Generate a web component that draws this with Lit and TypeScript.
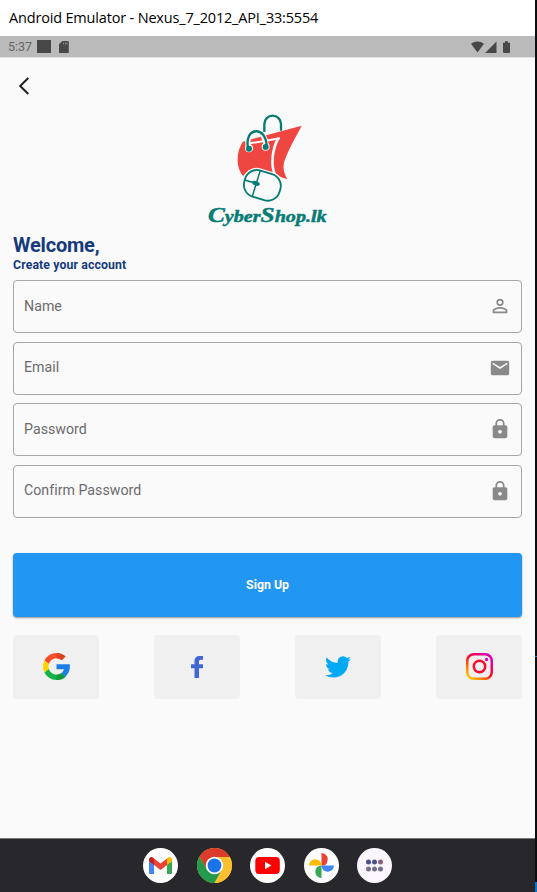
import { LitElement, html, css, svg } from "lit";
import { customElement, property } from "lit/decorators.js";

const glyphs: Record<string, unknown> = {
  person: svg`<path d="M12 5.9a2.1 2.1 0 1 1 0 4.2 2.1 2.1 0 0 1 0-4.2m0 9c2.97 0 6.1 1.46 6.1 2.1v1.1H5.9V17c0-.64 3.13-2.1 6.1-2.1M12 4a4 4 0 1 0 0 8 4 4 0 0 0 0-8zm0 9c-2.67 0-8 1.34-8 4v3h16v-3c0-2.66-5.33-4-8-4z"/>`,
  mail: svg`<path d="M20 4H4c-1.1 0-2 .9-2 2v12c0 1.1.9 2 2 2h16c1.1 0 2-.9 2-2V6c0-1.1-.9-2-2-2zm0 4-8 5-8-5V6l8 5 8-5z"/>`,
  lock: svg`<path d="M18 8h-1V6c0-2.76-2.24-5-5-5S7 3.24 7 6v2H6c-1.100 0-2 .9-2 2v10c0 1.100.9 2 2 2h12c1.100 0 2-.9 2-2V10c0-1.100-.9-2-2-2zm-6 9c-1.100 0-2-.9-2-2s.9-2 2-2 2 .9 2 2-.9 2-2 2zm3.100-9H8.900V6a3.100 3.100 0 0 1 6.200 0z"/>`,
};

@customElement("form-field")
class FormField extends LitElement {
  @property() label = "";
  @property() icon = "";
  static styles = css`
    :host {
      display: flex; align-items: center; justify-content: space-between;
      box-sizing: border-box; height: 53px; padding: 0 10px;
      border: 1px solid #a6a6a6; border-radius: 4px;
      font: 14.2px Roboto, sans-serif; color: #6c6c6c;
    }
    .label { line-height: 20px; padding-bottom: 2px; letter-spacing: 0.02px; }
    svg { width: 22px; height: 22px; fill: #898989; display: block; margin-bottom: 0.5px; }
  `;
  render() {
    return html`<span class="label">${this.label}</span>
      <svg viewBox="0 0 24 24">${glyphs[this.icon]}</svg>`;
  }
}

const shopLogo = html`<svg class="logo" viewBox="0 0 408 390">
  <path d="M193 72V48a25 25 0 0 1 50 0v20" fill="none" stroke="#087c74" stroke-width="7"/>
  <path d="M128 101L305 53C287 88 265 125 253 160c-6 20 0 38 9 53-12-2-22-5-31-14l-42-13-42 1-18 17C106 176 109 132 128 101z" fill="#f04641"/>
  <path d="M150 106L240 91" fill="none" stroke="#fafafa" stroke-width="6"/>
  <path d="M235 90c-17 32-25 78-9 114" fill="none" stroke="#fafafa" stroke-width="8"/>
  <path d="M146 119C130 58 196 50 198 115" fill="none" stroke="#fafafa" stroke-width="16"/>
  <circle cx="147" cy="121" r="12" fill="#fafafa"/><circle cx="197" cy="116" r="12" fill="#fafafa"/>
  <path d="M144 119C132 58 198 50 200 115" fill="none" stroke="#087c74" stroke-width="7"/>
  <circle cx="147" cy="122" r="9" fill="#087c74"/><circle cx="197" cy="117" r="9" fill="#087c74"/>
  <g transform="rotate(17 187 232)">
    <rect x="126" y="185" width="122" height="94" rx="42" fill="#fafafa"/>
    <rect x="132" y="191" width="110" height="82" rx="37" fill="#fafafa" stroke="#087c74" stroke-width="5.500"/>
    <path d="M168 191v82M132 232h36" fill="none" stroke="#087c74" stroke-width="4.500"/>
    <ellipse cx="167" cy="232" rx="12" ry="7" fill="#087c74"/>
  </g>
  <text class="brand" x="24" y="342" textLength="356" lengthAdjust="spacingAndGlyphs"><tspan class="cap">C</tspan>yber<tspan class="cap">S</tspan>hop.lk</text>
</svg>`;

const google = html`<svg class="g" viewBox="0 0 48 48">
  <path fill="#f94c28" d="M24 9.500c3.500 0 6.700 1.200 9.200 3.600l6.800-6.900C35.900 2.400 30.500 0 24 0 14.600 0 6.500 5.400 2.600 13.200l7.900 6.200C12.400 13.700 17.700 9.500 24 9.500z"/>
  <path fill="#d94522" d="M24 9.500c3.500 0 6.700 1.200 9.200 3.600l6.800-6.900C35.900 2.400 30.500 0 24 0z"/>
  <path fill="#1b7de8" d="M47.500 20H24v9h13.100c-.6 3-2.300 5.500-4.800 7.200l7.700 6C45.500 36.900 49 29 47.500 20z"/>
  <path fill="#ffd500" d="M10.500 28.600a14.500 14.500 0 0 1 0-9.200l-7.900-6.200a24 24 0 0 0 0 21.600z"/>
  <path fill="#12b347" d="M24 48c6.500 0 11.900-2.100 16-5.800l-7.700-6c-2.200 1.500-4.900 2.300-8.300 2.300-6.300 0-11.600-4.200-13.500-9.900l-7.900 6.200C6.500 42.600 14.600 48 24 48z"/>
  <path fill="#0f993e" d="M24 48c6.500 0 11.900-2.100 16-5.800l-7.700-6c-2.200 1.500-4.900 2.300-8.300 2.300z"/>
</svg>`;

const facebook = html`<svg class="f" viewBox="0 0 12 22">
  <path fill="#4267d5" d="M3.500 22V12.300H0V8.200h3.500V5.300C3.500 1.900 5.500 0 8.700 0H12v3.800H9.900C8.400 3.800 8 4.500 8 5.700v2.500h4v4.100H8V22z"/>
</svg>`;

const twitter = html`<svg class="t" viewBox="0 2 24 20">
  <path fill="#03a9f4" d="M23.950 4.570a10 10 0 0 1-2.820.77 4.960 4.960 0 0 0 2.160-2.720c-.95.550-2.010.950-3.130 1.180a4.920 4.920 0 0 0-8.380 4.480C7.690 8.090 4.070 6.130 1.640 3.160a4.920 4.920 0 0 0 1.520 6.570 4.900 4.900 0 0 1-2.230-.610v.060a4.920 4.920 0 0 0 3.950 4.830 5 5 0 0 1-2.210.080 4.940 4.940 0 0 0 4.600 3.420A9.870 9.870 0 0 1 0 19.540a13.990 13.990 0 0 0 7.550 2.210c9.050 0 14-7.500 14-13.980 0-.210 0-.420-.020-.630a9.940 9.940 0 0 0 2.420-2.570z"/>
</svg>`;

const instagram = html`<svg class="i" viewBox="0 0 27 27">
  <defs><linearGradient id="ig" x1="0.100" y1="1" x2="0.900" y2="0">
    <stop offset="0" stop-color="#ffc800"/><stop offset=".25" stop-color="#ff7a00"/>
    <stop offset=".5" stop-color="#ff0a20"/><stop offset=".72" stop-color="#f0006a"/><stop offset="1" stop-color="#d400c4"/>
  </linearGradient></defs>
  <rect x="1.250" y="1.250" width="24.500" height="24.500" rx="6.500" fill="none" stroke="url(#ig)" stroke-width="2.500"/>
  <circle cx="13.500" cy="13.500" r="5.700" fill="none" stroke="#fb0b2c" stroke-width="2.500"/>
  <circle cx="20.600" cy="6.500" r="1.650" fill="#dc00a4"/>
</svg>`;

const dockApps = [
  svg`<circle cx="17.500" cy="17.500" r="17.500" fill="#fff"/>
    <path fill="#4285f4" d="M6 13v11.500q0 1.500 1.500 1.500H11V14z"/>
    <path fill="#34a853" d="M24 14v12h3.500q1.500 0 1.500-1.500V13z"/>
    <path fill="#fbbc04" d="M24 10.500V17l5-3.800V11.500c0-2.400-2.400-3.300-4-2z"/>
    <path fill="#c5221f" d="M6 11.500v1.700l5 3.800v-6.500l-1-1c-1.600-1.300-4-.4-4 2z"/>
    <path fill="#ea4335" d="M11 10.500l6.500 4.900 6.500-4.900V17l-6.500 4.900L11 17z"/>`,
  svg`<circle cx="17.500" cy="17.500" r="17.500" fill="#fbc02d"/>
    <path fill="#db3b2b" d="M17.500 17.500V9H32.800A17.500 17.500 0 0 0 2.350 8.750L10 21.800z"/>
    <path fill="#249a4c" d="M2.350 8.750A17.500 17.500 0 0 0 17.500 35l7.400-13.200-14.800-.1z"/>
    <path fill="#fbc02d" d="M17.500 9h15.300A17.500 17.500 0 0 1 17.500 35l7.500-13z"/>
    <circle cx="17.500" cy="17.500" r="8.700" fill="#fff"/><circle cx="17.500" cy="17.500" r="6.900" fill="#1a73e8"/>`,
  svg`<circle cx="17.500" cy="17.500" r="17.500" fill="#fff"/>
    <rect x="5.300" y="9" width="24.500" height="17" rx="4" fill="#f00"/><path d="M15 13.800v7.400l6.500-3.700z" fill="#fff"/>`,
  svg`<circle cx="17.500" cy="17.500" r="17.500" fill="#fff"/>
    <path fill="#ea4335" d="M17.500 17.500V5a6.250 6.250 0 0 1 6.250 6.250q0 3.750-3 6.250z"/>
    <path fill="#4285f4" d="M17.500 17.500H30a6.250 6.250 0 0 1-12.500 0z"/>
    <path fill="#34a853" d="M17.500 17.500V30a6.250 6.250 0 0 1 0-12.500z"/>
    <path fill="#fbbc04" d="M17.500 17.500H5a6.250 6.250 0 0 1 12.500 0z"/>`,
  svg`<circle cx="17.500" cy="17.500" r="17.500" fill="#fcf7ff"/>
    <g fill="#47518c"><circle cx="11.500" cy="14" r="2.500"/><circle cx="17.500" cy="14" r="2.500"/></g>
    <circle cx="23.500" cy="14" r="2.500" fill="#8b5f7d"/>
    <g fill="#74718a"><circle cx="11.500" cy="21" r="2.500"/><circle cx="17.500" cy="21" r="2.500"/><circle cx="23.500" cy="21" r="2.500"/></g>`,
];

@customElement("app-root")
class AppRoot extends LitElement {
  static styles = css`
    :host { display: flex; width: 537px; height: 892px; background: #0b0c0d; font-family: Roboto, sans-serif; overflow: hidden; }
    svg { display: block; flex: none; }
    .window { width: 535px; display: flex; flex-direction: column; background: #fafafa; }
    .title { height: 36px; box-sizing: border-box; padding-left: 9px; background: #fff; color: #000; font: 15px/35px "Open Sans", "Noto Sans", sans-serif; white-space: nowrap; }
    .title span { display: inline-block; transform-origin: 0 50%; transform: scaleX(0.965); letter-spacing: -0.17px; }
    .status { height: 21px; box-sizing: border-box; background: #bababa; box-shadow: 0 1px #e0e0e0; display: flex; align-items: center; justify-content: space-between; padding: 0 25px 0 8px; color: #666; font-size: 12.5px; }
    .status div { display: flex; align-items: center; }
    .time { width: 29px; letter-spacing: 0; }
    .screen { flex: 1; display: flex; flex-direction: column; padding: 0 13px; }
    .back { margin: 19.500px 0 0 5px; }
    .logo { width: 136px; height: 130px; margin: 13.500px 0 0 187px; }
    .brand { font: italic bold 51px "Liberation Serif", serif; fill: #087c74; stroke: #087c74; stroke-width: 1.500; }
    .cap { font-size: 64px; }
    h1 { margin: -4px 0 0; font-size: 20px; line-height: 23px; color: #163a7c; letter-spacing: -0.2px; }
    h2 { margin: 0; font-size: 12.3px; line-height: 16px; color: #163a7c; letter-spacing: 0.1px; }
    .fields { margin-top: 7px; display: grid; gap: 8.500px; }
    .submit { margin: 35.300px 0 0; height: 64px; padding: 0; border: 0; border-radius: 4px; background: #2196f3; color: #fff; font: bold 12.3px Roboto, sans-serif; box-shadow: 0 1px 2px #0006; flex: none; }
    .social { display: flex; justify-content: space-between; margin: 18px 0 0; }
    .tile { width: 86px; height: 64px; border-radius: 4px; background: #f0f0f0; display: grid; place-items: center; }
    .g, .i { width: 27px; height: 27px; margin-bottom: 1px; }
    .f { width: 12px; height: 22px; }
    .t { width: 26px; height: 22px; }
    .dock { height: 54px; box-sizing: border-box; border-top: 1px solid #77777a; background: #28272c; display: flex; justify-content: center; align-items: center; gap: 18.500px; }
    .dock svg { width: 35px; height: 35px; }
    .edge { flex: 1; display: flex; flex-direction: column; padding-top: 656px; }
    .mark { height: 1px; background: #2c7cc4; }
    .corner { height: 10px; margin-top: 225px; background: #0078d4; }
  `;
  render() {
    return html`
      <div class="window">
        <div class="title"><span>Android Emulator - Nexus_7_2012_API_33:5554</span></div>
        <div class="status">
          <div><span class="time">5:37</span>
            <svg width="22" height="13" viewBox="0 0 22 13" fill="#484848"><rect width="14" height="13"/></svg>
            <svg width="10" height="12" viewBox="0 0 10 12"><path fill="#484848" d="M3 0h5.500Q9.500 0 9.500 1v10q0 1-1 1h-8q-1 0-1-1V3.500z" transform="translate(.3)"/><path d="M4.500 1.500v2M6.500 1.500v2M8 1.500v2" stroke="#999" stroke-width=".8"/></svg>
          </div>
          <svg width="39" height="12" viewBox="0 0 39 12" fill="#484848">
            <path d="M0 2.800Q6.500-1.800 13 2.800L6.500 11.500zM25.500 .5V12H14zM32 1.800h2V.3h3v1.500h2V11q0 1-1 1h-5q-1 0-1-1z"/>
          </svg>
        </div>
        <main class="screen">
          <svg class="back" width="12" height="18" viewBox="0 0 12 18"><path d="M10.300 1L2.200 9l8.100 8" fill="none" stroke="#222" stroke-width="2"/></svg>
          ${shopLogo}
          <h1>Welcome,</h1>
          <h2>Create your account</h2>
          <div class="fields">
            <form-field label="Name" icon="person"></form-field>
            <form-field label="Email" icon="mail"></form-field>
            <form-field label="Password" icon="lock"></form-field>
            <form-field label="Confirm Password" icon="lock"></form-field>
          </div>
          <button class="submit">Sign Up</button>
          <div class="social">
            ${[google, facebook, twitter, instagram].map((icon) => html`<div class="tile">${icon}</div>`)}
          </div>
        </main>
        <nav class="dock">${dockApps.map((app) => html`<svg viewBox="0 0 35 35">${app}</svg>`)}</nav>
      </div>
      <div class="edge"><div class="mark"></div><div class="corner"></div></div>`;
  }
}
